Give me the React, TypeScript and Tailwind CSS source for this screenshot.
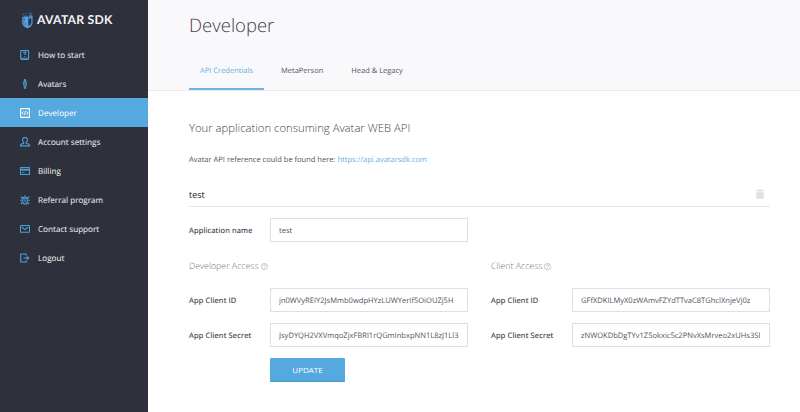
import React from 'react';

type IconProps = { name: string };

function NavIcon({ name }: IconProps) {
  const common = { width: 10, height: 10, viewBox: '0 0 10 10', fill: 'none', stroke: 'currentColor', strokeWidth: 1.1 };
  switch (name) {
    case 'help':
      return (
        <svg {...common}>
          <rect x="0.7" y="0.6" width="7.9" height="8.800" rx="0.8" />
          <path d="M1 8.200h7.600" strokeWidth="0.8" />
          <path d="M3.600 3.200c0-1.500 2.200-1.400 2.200 0 0 .8-1.100.8-1.100 1.800M4.700 5.900v.9" />
        </svg>
      );
    case 'avatar':
      return (
        <svg {...common}>
          <circle cx="5" cy="1.2" r="1.2" fill="currentColor" stroke="none" />
          <path d="M3.600 2.800h2.800v3.400l-.6.4v2.800H4.200V6.600l-.6-.4z" fill="currentColor" fillOpacity="0.6" strokeWidth="0.8" />
        </svg>
      );
    case 'code':
      return (
        <svg {...common}>
          <rect x="0.6" y="0.6" width="8.8" height="8.8" rx="0.5" strokeWidth="1.1" />
          <path d="M3.4 3.4L2 5l1.400 1.600M6.600 3.400L8 5 6.600 6.600M5.500 3L4.500 7" strokeWidth="0.9" />
        </svg>
      );
    case 'user':
      return (
        <svg {...common}>
          <path d="M5 .6c3.300 0 2.700 3.400 1.300 4.900v.8l2.600.9c.5.200.6.800.6 1.700h-9c0-.9.100-1.500.6-1.700l2.600-.9v-.8C2.300 4 1.700.6 5 .6z" />
        </svg>
      );
    case 'card':
      return (
        <svg {...common}>
          <rect x="0.500" y="1.500" width="9" height="7" rx="0.500" />
          <path d="M.5 3.700h9" strokeWidth="1.900" />
          <path d="M2 6.700h2.500" strokeWidth="0.700" />
        </svg>
      );
    case 'referral':
      return (
        <svg {...common}>
          <path d="M2.700 4.200c0-3 4.600-3 4.600 0v2.200c0 3.600-4.600 3.600-4.600 0z" />
          <path d="M5 .2v1.300M2.800 3.300L.7 1.800M7.200 3.300l2.100-1.500M2.700 5.300H.2M7.300 5.300h2.500M2.900 7.200L.8 9M7.100 7.200L9.200 9M2.700 3.300h4.600" />
          <path d="M5 4.200v3" />
        </svg>
      );
    case 'mail':
      return (
        <svg {...common}>
          <rect x="0.500" y="1.500" width="9" height="6.800" rx="0.600" />
          <path d="M1.800 3L5 5.600 8.200 3" />
        </svg>
      );
    default:
      return (
        <svg {...common}>
          <path d="M6.200 2.700V1H.7v8h5.500V7.300" />
          <path d="M3.500 5h4" />
          <path d="M6.800 2.700L9.600 5 6.800 7.300z" fill="currentColor" stroke="none" />
        </svg>
      );
  }
}

function Logo() {
  return (
    <svg width="13" height="19" viewBox="0 0 13 19">
      <defs>
        <linearGradient id="face" x1="0" y1="0" x2="1" y2="0">
          <stop offset="0" stopColor="#3f76b4" />
          <stop offset="0.400" stopColor="#5fa4e2" />
          <stop offset="1" stopColor="#4a7fc0" />
        </linearGradient>
      </defs>
      <path d="M1 6h1.500V4.500h1.300v1.300h1.400V4.600h1.400v1.600l1.400-.2V4.400h1.500V1.500h.8v3h1.400v7.700c-.4 2.300-2.300 4.200-4.900 5C3.700 16.400 1.400 14.800.8 12z" fill="url(#face)" />
      <path d="M1.400 2.600h1.300v1.200H1.400zM4.400 1.800h1v1.200h-1zM7.600 2h1v1.200h-1z" fill="#3a6ea8" />
      <path d="M7.200 7.600h3v4c-.3 1.600-1.100 2.500-2.400 3.200l-.9-.7.900-1-.7-1.400.4-1.500z" fill="#263655" />
      <path d="M2.400 8.500h2M4 12.800l1.500.3" stroke="#2f5585" strokeWidth="0.700" />
    </svg>
  );
}

const navItems = [
  { icon: 'help', label: 'How to start' },
  { icon: 'avatar', label: 'Avatars' },
  { icon: 'code', label: 'Developer' },
  { icon: 'user', label: 'Account settings' },
  { icon: 'card', label: 'Billing' },
  { icon: 'referral', label: 'Referral program' },
  { icon: 'mail', label: 'Contact support' },
  { icon: 'logout', label: 'Logout' },
];

function Sidebar() {
  return (
    <aside className="flex h-full w-[148px] shrink-0 flex-col bg-[#2e303c]">
      <div className="flex h-10 items-center gap-[3px] pl-[21px]">
        <Logo />
        <span className="font-[Lato] text-[12.200px] font-bold tracking-[0.250px] text-[#f4f4f5]">AVATAR SDK</span>
      </div>
      <nav>
        {navItems.map((item) => {
          const active = item.label === 'Developer';
          return (
            <a
              key={item.label}
              className={`flex h-[29px] items-center gap-[8px] pt-px pl-5 text-[8.150px] leading-[12px] font-medium ${active ? 'bg-[#55a9de] text-white' : 'text-[#f0f0f2]'}`}
            >
              <span className={`flex ${active ? 'text-white' : 'text-[#4c9fd5]'}`}>
                <NavIcon name={item.icon} />
              </span>
              <span className="pt-px [-webkit-text-stroke:0.150px_#ffffff40]">{item.label}</span>
            </a>
          );
        })}
      </nav>
    </aside>
  );
}

function Field({ label, value }: { label: string; value: string }) {
  return (
    <div className="flex h-6 items-center">
      <span className="w-[81px] shrink-0 pt-[2px] text-[7.500px] leading-[12px] font-medium tracking-[0.160px] text-[#2e2f39] [-webkit-text-stroke:0.200px_#2e2f3980]">{label}</span>
      <div className="flex h-6 w-[198px] items-center overflow-hidden border border-[#dfdfe3] px-2">
        <span className="overflow-hidden pt-[2px] text-[7.560px] leading-[12px] whitespace-nowrap text-[#53545c]">{value}</span>
      </div>
    </div>
  );
}

function AccessTitle({ title }: { title: string }) {
  return (
    <div className="flex h-4 items-center gap-[2px] text-[#a0a1a8]">
      <span className="pt-px text-[8.800px] leading-[12px] font-light text-[#73747b]">{title}</span>
      <svg width="7" height="7" viewBox="0 0 7 7" fill="none" stroke="currentColor" strokeWidth="0.600" className="mt-[3px]">
        <circle cx="3.500" cy="3.500" r="3.100" />
        <path d="M2.600 2.700c0-1.300 1.900-1.200 1.900 0 0 .7-1 .6-1 1.400M3.500 4.700v.6" />
      </svg>
    </div>
  );
}

export default function App() {
  return (
    <div className="flex h-[412px] w-[800px] overflow-hidden bg-white font-['Open_Sans','Noto_Sans',sans-serif] [text-rendering:geometricPrecision]">
      <Sidebar />
      <div className="flex min-w-0 flex-1 flex-col">
        <header className="flex h-[91px] flex-col justify-between border-b border-[#ebebef] bg-[#f9f9fc] pl-[41px]">
          <h1 className="pt-[12px] text-[18.500px] leading-[28px] font-light text-[#3d3e48]">Developer</h1>
          <div className="flex h-[41px] text-[7.500px] text-[#53545c]">
            <span className="flex w-[75px] justify-center border-b-2 border-[#6fb5e3] pt-[16px] leading-[12px] text-[#63afe0]">API Credentials</span>
            <span className="ml-[17px] pt-[16px] leading-[12px]">MetaPerson</span>
            <span className="ml-[28px] pt-[16px] leading-[12px]">Head &amp; Legacy</span>
          </div>
        </header>
        <main className="w-[622px] pt-[29px] pl-[41px]">
          <h2 className="text-[11.300px] leading-[18px] font-light text-[#45464e]">Your application consuming Avatar WEB API</h2>
          <p className="mt-[16px] text-[7.530px] leading-[12px] text-[#53545c]">
            Avatar API reference could be found here: <a className="text-[#63afe0]">https://api.avatarsdk.com</a>
          </p>
          <div className="mt-[17px] flex h-[24px] items-center justify-between border-b border-[#e6e6ea] pr-[6px]">
            <span className="text-[9px] font-medium text-[#2e303c] [-webkit-text-stroke:0.150px_#2e303c80]">test</span>
            <svg width="8" height="10" viewBox="0 0 8 10" fill="#dfdfe8" className="-mt-px">
              <path d="M0 1.300h2.500V.2h3v1.100H8v1.200H0zM.3 3.200h7.400V9.200q0 .6-.6.6H.9q-.6 0-.6-.6z" />
            </svg>
          </div>
          <div className="mt-[11px]">
            <Field label="Application name" value="test" />
          </div>
          <div className="mt-[15px] flex gap-[23px]">
            <section className="flex w-[279px] flex-col">
              <AccessTitle title="Developer Access" />
              <div className="mt-[15px] flex flex-col gap-[11px]">
                <Field label="App Client ID" value="jn0WVyREIY2JsMmb0wdpHYzLUWYerIf5OiOUZj5H" />
                <Field label="App Client Secret" value="JsyDYQH2VXVmqoZjxFBRl1rQGmInbxpNN1L8zJ1Ll3" />
              </div>
              <button className="mt-[11px] ml-[81px] h-6 w-[75px] rounded-[1px] border-b border-[#3f98d2] bg-[#55a9de] text-[8px] text-white">UPDATE</button>
            </section>
            <section className="flex w-[279px] flex-col">
              <AccessTitle title="Client Access" />
              <div className="mt-[15px] flex flex-col gap-[11px]">
                <Field label="App Client ID" value="GFfXDKILMyX0zWAmvFZYdTTvaC8TGhclXnjeVj0z" />
                <Field label="App Client Secret" value="zNWOKDbDgTYv1Z5okxic5c2PNvXsMrveo2xUHs3Sl" />
              </div>
            </section>
          </div>
        </main>
      </div>
    </div>
  );
}
